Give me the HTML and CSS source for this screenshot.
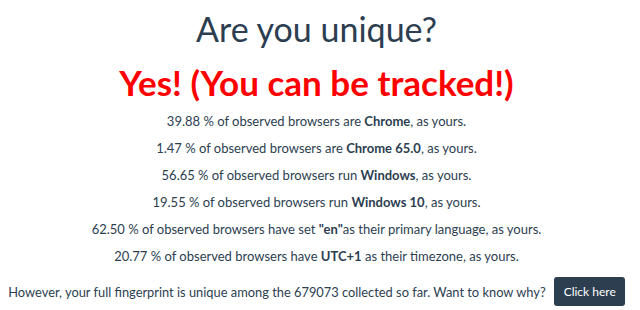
FILE: index.html
```html
<!DOCTYPE html>
<html>
<head>
<meta charset="utf-8">
<link rel="stylesheet" href="styles.css">
</head>
<body>
<div class="page">
  <h1 class="title">Are you unique?</h1>
  <h2 class="verdict">Yes! (You can be tracked!)</h2>
  <p class="stat">39.88 % of observed browsers are <b>Chrome</b>, as yours.</p>
  <p class="stat">1.47 % of observed browsers are <b>Chrome 65.0</b>, as yours.</p>
  <p class="stat">56.65 % of observed browsers run <b>Windows</b>, as yours.</p>
  <p class="stat">19.55 % of observed browsers run <b>Windows 10</b>, as yours.</p>
  <p class="stat">62.50 % of observed browsers have set <b>"en"</b>as their primary language, as yours.</p>
  <p class="stat">20.77 % of observed browsers have <b>UTC+1</b> as their timezone, as yours.</p>
  <p class="final"><span>However, your full fingerprint is unique among the 679073 collected so far. Want to know why?</span> <a class="btn">Click here</a></p>
</div>
</body>
</html>
```
FILE: styles.css
```css
html, body {
  margin: 0;
  padding: 0;
  background: #ffffff;
}
body {
  font-family: Lato, "Open Sans", sans-serif;
  color: #2c3e50;
}
.page {
  width: 633px;
  text-align: center;
}
.title {
  margin: 0;
  padding-top: 9px;
  font-size: 34px;
  font-weight: 400;
  line-height: 40px;
}
.verdict {
  margin: 13px 0 6px;
  font-size: 35px;
  font-weight: 700;
  line-height: 40px;
  color: #ff0000;
}
.stat {
  margin: 0;
  font-size: 13px;
  line-height: 27px;
}
.stat b {
  font-weight: 700;
}
.final {
  margin: 7px 0 0;
  font-size: 12.85px;
  line-height: 16px;
  display: flex;
  align-items: center;
  justify-content: center;
  gap: 8px;
}
.btn {
  display: inline-block;
  background: #2c3e50;
  color: #ffffff;
  font-size: 12px;
  line-height: 17px;
  padding: 6px 9px 6px 10px;
  border-radius: 3px;
}
```
